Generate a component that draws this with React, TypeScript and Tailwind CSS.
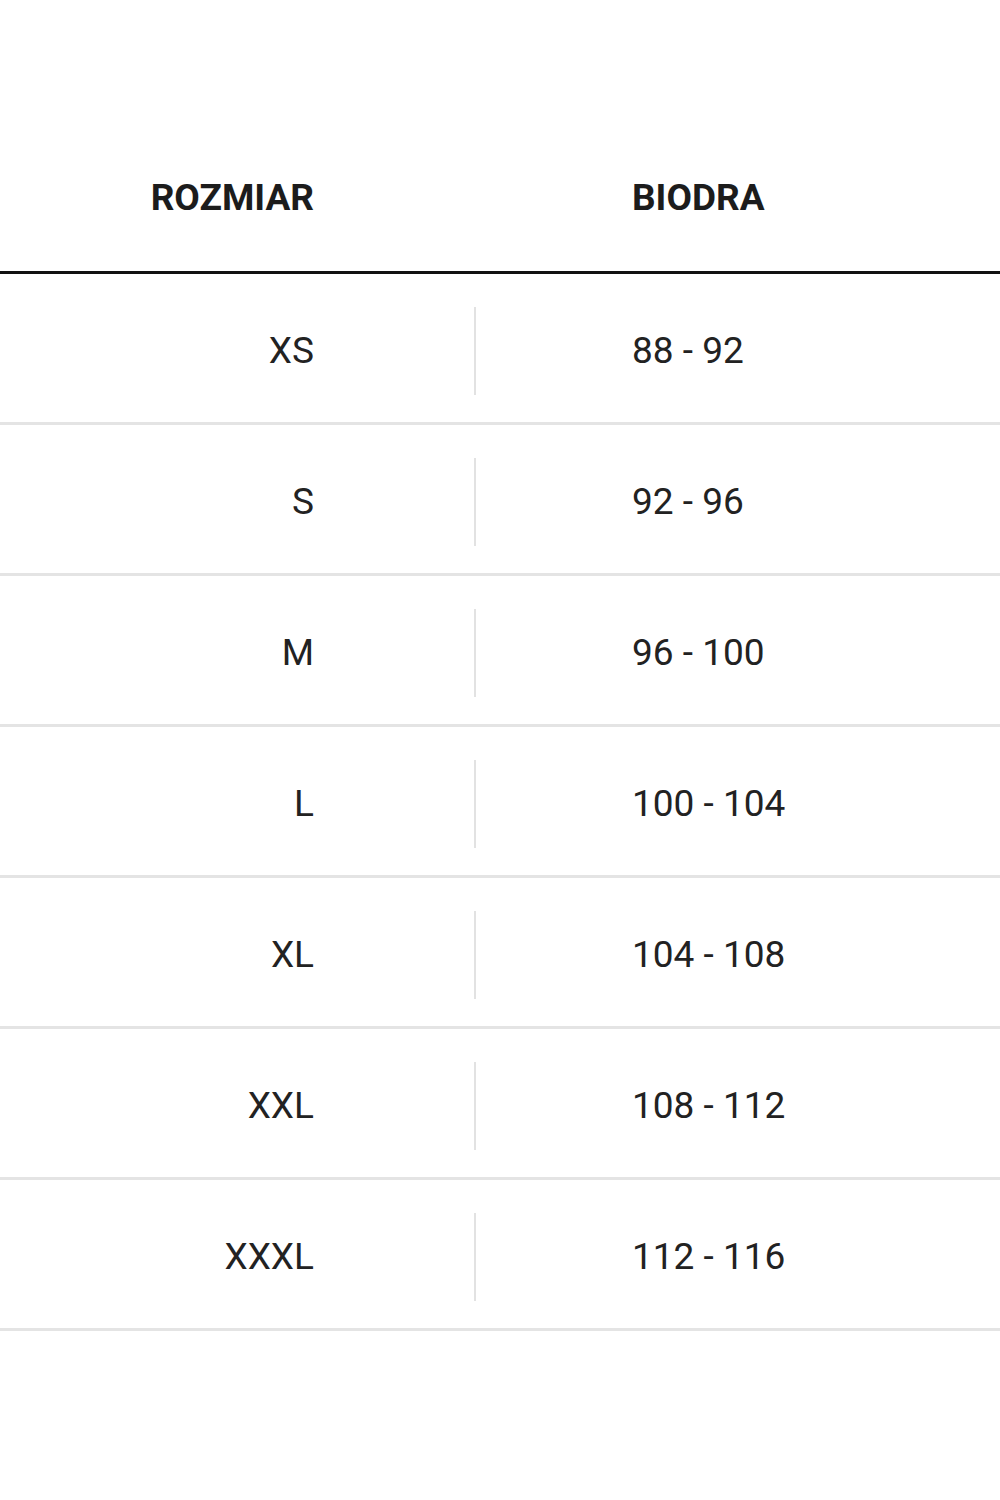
const rows = [
  { size: 'XS', hips: '88 - 92' },
  { size: 'S', hips: '92 - 96' },
  { size: 'M', hips: '96 - 100' },
  { size: 'L', hips: '100 - 104' },
  { size: 'XL', hips: '104 - 108' },
  { size: 'XXL', hips: '108 - 112' },
  { size: 'XXXL', hips: '112 - 116' },
];

export default function App() {
  return (
    <div className="w-[1000px] h-[1500px] bg-white text-[#222] font-['Roboto',sans-serif]">
      {/* Header */}
      <div className="flex pt-[176px] pb-[51px] border-b-[3px] border-[#111]">
        <div className="w-[314px] text-right text-[37px] leading-[44px] font-bold text-[#1c1c1c]">ROZMIAR</div>
        <div className="w-[318px]" />
        <div className="text-[37px] leading-[44px] font-bold text-[#1c1c1c]">BIODRA</div>
      </div>

      {/* Rows */}
      {rows.map((row) => (
        <div key={row.size} className="flex items-center pt-[33px] pb-[27px] border-b-[3px] border-[#e4e4e4]">
          <div className="w-[314px] text-right text-[37px] leading-[44px]">{row.size}</div>
          <div className="w-[160px]" />
          <div className="w-[2px] h-[88px] bg-[#e2e2e2]" />
          <div className="w-[156px]" />
          <div className="text-[37px] leading-[44px]">{row.hips}</div>
        </div>
      ))}
    </div>
  );
}
